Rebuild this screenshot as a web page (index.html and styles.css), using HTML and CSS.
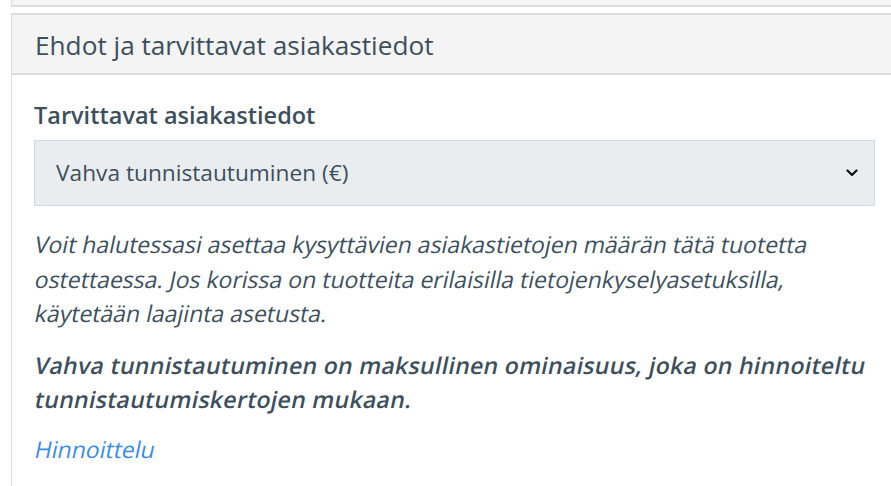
FILE: index.html
```html
<!DOCTYPE html>
<html lang="fi">
<head>
<meta charset="utf-8">
<link rel="stylesheet" href="styles.css">
</head>
<body>
<div class="prev-panel"></div>
<section class="panel">
  <header class="panel-head">Ehdot ja tarvittavat asiakastiedot</header>
  <div class="panel-body">
    <label class="field-label">Tarvittavat asiakastiedot</label>
    <div class="select">
      <span class="select-value">Vahva tunnistautuminen (€)</span>
      <svg class="chevron" width="12" height="8" viewBox="0 0 12 8"><path d="M1.5 1.5 L6 6 L10.5 1.5" fill="none" stroke="#111" stroke-width="2.2" stroke-linecap="round" stroke-linejoin="round"/></svg>
    </div>
    <p class="help">
      <span class="line">Voit halutessasi asettaa kysyttävien asiakastietojen määrän tätä tuotetta</span>
      <span class="line">ostettaessa. Jos korissa on tuotteita erilaisilla tietojenkyselyasetuksilla,</span>
      <span class="line">käytetään laajinta asetusta.</span>
    </p>
    <p class="help strong">
      <span class="line">Vahva tunnistautuminen on maksullinen ominaisuus, joka on hinnoiteltu</span>
      <span class="line">tunnistautumiskertojen mukaan.</span>
    </p>
    <a class="link" href="#"><span class="line">Hinnoittelu</span></a>
  </div>
</section>
</body>
</html>
```

FILE: styles.css
```css
html, body {
  margin: 0;
  padding: 0;
  background: #fff;
}
body {
  font-family: "Open Sans", "Noto Sans", sans-serif;
  color: #3d4f5c;
  overflow: hidden;
  width: 891px;
  height: 486px;
}
.prev-panel {
  margin-left: 11px;
  width: 900px;
  height: 5px;
  background: #f4f4f4;
  border-left: 1px solid #dcdcdc;
  border-bottom: 2px solid #dcdcdc;
}
.panel {
  margin-top: 6px;
  margin-left: 11px;
  width: 900px;
  border: 1px solid #dcdcdc;
  border-right: none;
  border-top-width: 2px;
}
.panel-head {
  background: #f4f4f4;
  border-bottom: 2px solid #dcdcdc;
  height: 60px;
  box-sizing: border-box;
  padding: 13px 0 0 23px;
  font-size: 26.2px;
  line-height: 34px;
  font-weight: 400;
}
.panel-body {
  padding: 24px 0 20px 22px;
  width: 841px;
}
.field-label {
  display: block;
  font-size: 23.5px;
  line-height: 32px;
  font-weight: 600;
}
.select {
  margin-top: 9px;
  height: 66px;
  box-sizing: border-box;
  background: #e9edf0;
  border: 1px solid #cfd9e0;
  display: flex;
  align-items: center;
  justify-content: space-between;
  padding: 0 16px 0 21px;
}
.select-value {
  font-size: 22.7px;
  line-height: 30px;
}
.chevron {
  display: block;
}
.help {
  margin: 21px 0 0;
  font-size: 23px;
  line-height: 34.5px;
}
.help.strong {
  margin-top: 17px;
  font-weight: 600;
  letter-spacing: 0.3px;
}
.line {
  display: block;
  width: max-content;
  transform: skewX(-12deg);
  transform-origin: 0 24px;
  white-space: nowrap;
}
.link {
  display: block;
  width: max-content;
  margin-top: 15px;
  font-size: 23px;
  line-height: 34px;
  color: #3a8ce3;
  text-decoration: none;
}
```
